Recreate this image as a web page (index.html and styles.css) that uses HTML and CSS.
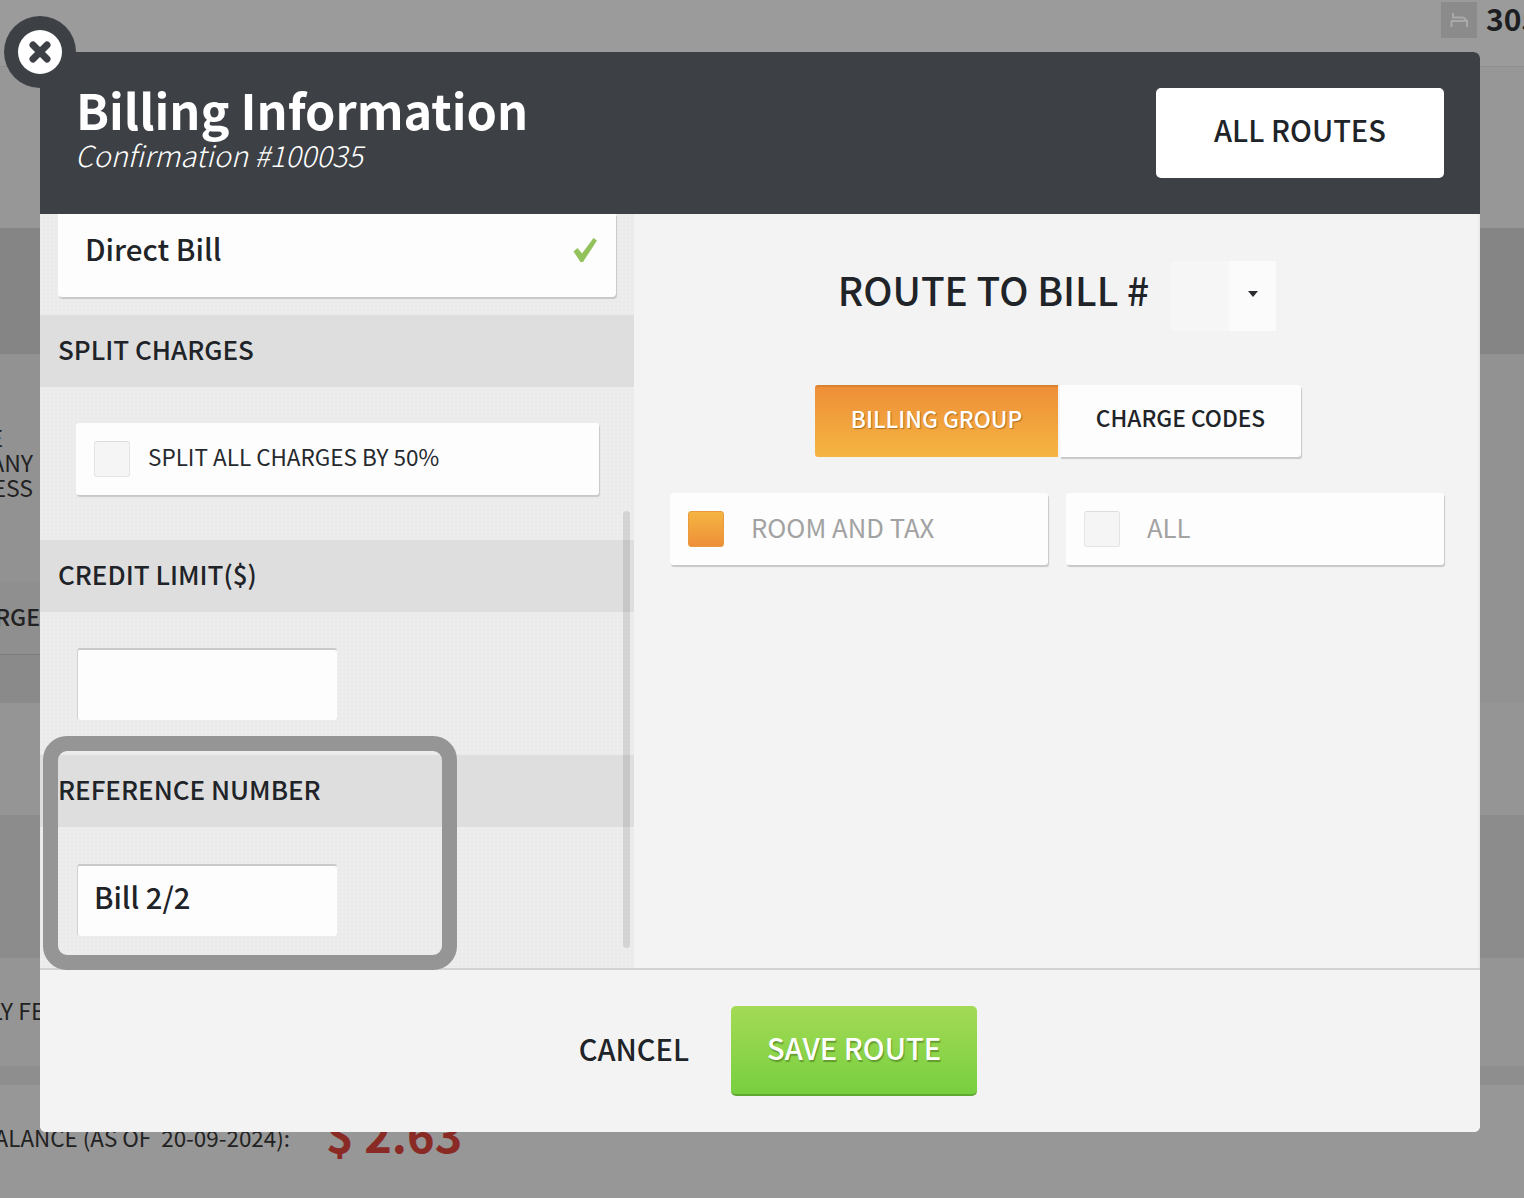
FILE: index.html
```html
<!DOCTYPE html>
<html lang="en">
<head>
<meta charset="utf-8">
<title>Billing Information</title>
<link rel="stylesheet" href="styles.css">
</head>
<body>
<main class="page">
  <div class="bg-top">
    <div class="room">
      <span class="room-icon">
        <svg width="18" height="14" viewBox="0 0 18 14" fill="none" stroke="#a9a9a9" stroke-width="2"><path d="M3 0v4.500h9c2.500 0 4 2 5 4.500M1 8h16v6M1.500 8v6"/></svg>
      </span>
      <span class="room-num">305</span>
    </div>
  </div>
  <div class="band band-a"></div>
  <div class="band band-b"></div>
  <div class="band band-c"><div class="clip-label"><span class="clip-first">NAME</span>COMPANY<br>ADDRESS</div></div>
  <div class="band band-d"><div class="cell-d"><div class="clip-label strong">CHARGE</div></div></div>
  <div class="band band-e"><div class="cell-e"></div></div>
  <div class="band band-f"></div>
  <div class="band band-g"></div>
  <div class="band band-h"><div class="clip-label wide-fee">DAILY FEE</div></div>
  <div class="band band-i"></div>
  <div class="band band-j">
    <div class="balance-label">BALANCE (AS OF&nbsp; 20-09-2024):</div>
    <div class="balance-value">$ 2.63</div>
  </div>
</main>

<section class="modal">
  <header class="modal-head">
    <div>
      <h1 class="title">Billing Information</h1>
      <p class="subtitle">Confirmation #100035</p>
    </div>
    <button class="btn-routes">ALL ROUTES</button>
  </header>

  <div class="modal-body">
    <div class="col-left">
      <div class="card-bill">
        <span>Direct Bill</span>
        <svg class="check" width="26" height="26" viewBox="0 0 26 26"><path d="M1.500 14.500l4-3.500 4.500 5.500L21.500 1l3.500 2.500L11 25h-2.500z" fill="#93c15c"/></svg>
      </div>
      <h2 class="band-title">SPLIT CHARGES</h2>
      <div class="block block-split">
        <label class="card-split"><span class="box"></span><span class="split-text">SPLIT ALL CHARGES BY 50%</span></label>
      </div>
      <h2 class="band-title">CREDIT LIMIT($)</h2>
      <div class="block block-credit"><input class="field" type="text" aria-label="Credit limit"></div>
      <h2 class="band-title">REFERENCE NUMBER</h2>
      <div class="block block-ref"><input class="field" type="text" value="Bill 2/2" aria-label="Reference number"></div>
      <div class="scrollbar"></div>
    </div>

    <div class="col-right">
      <div class="route-row">
        <span class="route-label">ROUTE TO BILL #</span>
        <div class="select"><span class="select-val"></span><span class="select-arrow"><i class="caret"></i></span></div>
      </div>
      <div class="tabs">
        <button class="tab tab-on">BILLING GROUP</button>
        <button class="tab tab-off">CHARGE CODES</button>
      </div>
      <div class="options">
        <div class="option"><span class="box box-on"></span><span class="option-text">ROOM AND TAX</span></div>
        <div class="option"><span class="box"></span><span class="option-text">ALL</span></div>
      </div>
    </div>
  </div>

  <footer class="modal-foot">
    <button class="btn-cancel">CANCEL</button>
    <button class="btn-save">SAVE ROUTE</button>
  </footer>

  <div class="highlight"></div>
  <button class="close" aria-label="Close">
    <span class="close-inner">
      <svg width="24" height="24" viewBox="0 0 24 24"><path d="M5 5L19 19M19 5L5 19" stroke="#3d4045" stroke-width="7" stroke-linecap="round" fill="none"/></svg>
    </span>
  </button>
</section>
</body>
</html>
```

FILE: styles.css
```css
* { box-sizing: border-box; }
html, body { margin: 0; padding: 0; height: 1198px; overflow: hidden; }
body {
  font-family: "Noto Sans CJK SC", "Noto Sans", sans-serif;
  color: #202327;
  background: #979797;
  position: relative;
}
button, input { font-family: inherit; }

/* page behind the dialog */
.page { display: flex; flex-direction: column; height: 1198px; overflow: hidden; }
.bg-top {
  height: 67px;
  background: #9b9b9b;
  border-bottom: 1px solid #8e8e8e;
  display: flex;
  justify-content: flex-end;
  padding-top: 2px;
}
.room { width: 83px; display: flex; align-items: flex-start; gap: 9px; overflow: hidden; }
.room-icon {
  flex: none; width: 36px; height: 36px; background: #8b8b8b;
  display: flex; align-items: center; justify-content: center;
}
.room-num { font-size: 30px; font-weight: 700; line-height: 32px; color: #1c1e21; }
.band { display: flex; align-items: center; flex: none; }
.band-a { height: 161px; background: #979797; }
.band-b { height: 126px; background: #858585; }
.band-c { height: 228px; background: #929292; align-items: flex-start; padding-top: 71px; }
.band-d { height: 73px; background: #929292; align-items: stretch; }
.band-e { height: 48px; background: #929292; align-items: stretch; }
.cell-d {
  width: 40px; flex: none; display: flex; align-items: center; padding-bottom: 4px;
  background: #8f8f8f; border-bottom: 1px solid #7c7c7c;
}
.cell-e { width: 40px; flex: none; background: #8a8a8a; }
.band-f { height: 112px; background: #959595; }
.band-g { height: 143px; background: #8c8c8c; }
.band-h { height: 108px; background: #959595; padding-bottom: 4px; }
.band-i { height: 19px; background: #8e8e8e; }
.band-j { height: 113px; background: #979797; padding-bottom: 10px; gap: 36px; justify-content: flex-start; }
.clip-label {
  width: 33px; flex: none; display: block; direction: rtl;
  font-size: 23px; line-height: 25px; white-space: nowrap; color: #222;
  text-align: right;
}
.clip-first { display: block; padding-right: 30px; }
.clip-label.strong { width: 40px; font-weight: 500; }
.clip-label.wide-fee { direction: ltr; text-align: left; width: 120px; margin-left: -46px; }
.balance-label { font-size: 22.400px; white-space: nowrap; width: 290px; flex: none; display: flex; justify-content: flex-end; color: #222; }
.balance-value { font-size: 46.800px; font-weight: 700; line-height: 1; color: #8a2a25; white-space: nowrap; margin-bottom: 6px; }

/* dialog */
.modal {
  position: absolute; left: 40px; top: 52px; width: 1440px; height: 1080px;
  display: flex; flex-direction: column;
  background-color: #f3f3f3;
  border-radius: 6px;
}
.modal-head {
  height: 162px; flex: none; background: #3d4045; border-radius: 6px 6px 0 0;
  display: flex; justify-content: space-between; align-items: flex-start;
  padding: 32px 36px 0;
}
.title { margin: 0; font-size: 48.600px; line-height: 50px; font-weight: 700; color: #fff; }
.subtitle { margin: 1px 0 0 -1px; font-size: 29px; line-height: 38px; font-style: italic; font-weight: 300; color: #fff; }
.btn-routes {
  width: 288px; height: 90px; margin-top: 4px; border: 0; border-radius: 5px; background: #fff;
  font-size: 29px; font-weight: 500; color: #202327; padding: 0 0 9px;
}
.modal-body { flex: 1; display: flex; min-height: 0; border-bottom: 2px solid #d2d2d2; }

.col-left {
  width: 594px; flex: none; position: relative; overflow: hidden;
  background-color: #ebebeb;
  background-image: radial-gradient(rgba(255,255,255,.14) 1px, transparent 1px);
  background-size: 4px 4px;
}
.card-bill {
  margin: 0 18px 18px; height: 83px; background: #fdfdfd; border-radius: 0 0 4px 4px;
  box-shadow: 1px 2px 1px #c8c8c8;
  display: flex; align-items: flex-start; justify-content: space-between;
  padding: 11px 18px 0 27px; font-size: 29.500px; font-weight: 500; line-height: 46px;
}
.check { margin-top: 12px; }
.band-title {
  margin: 0; height: 72px; background: #dedede; padding-left: 18px;
  font-size: 26px; line-height: 67px; font-weight: 500; color: #202327;
}
.block { padding: 36px 36px 0; }
.block-split { height: 153px; padding-right: 35px; }
.block-credit { height: 143px; }
.block-ref { height: 141px; padding-top: 37px; }
.card-split {
  height: 72px; display: flex; align-items: center; gap: 18px;
  background: #fdfdfd; border-radius: 3px; box-shadow: 1px 2px 1px #c8c8c8;
  padding: 0 18px; font-size: 22.500px; color: #26292d;
}
.split-text { margin-bottom: 6px; }
.box {
  width: 36px; height: 36px; flex: none; border-radius: 3px;
  background: #f5f5f5; border: 1px solid #e4e4e4; border-top-color: #dcdcdc;
}
.box-on {
  background: linear-gradient(#f5b542, #ee8f38); border: 1px solid #e89a3c;
}
.field {
  display: block; width: 260px; height: 72px; margin-left: 1px;
  background: #fdfdfd; border: 0; border-top: 2px solid #c9c9c9; border-left: 1px solid #d2d2d2;
  border-radius: 3px; outline: 0;
  padding: 0 16px 10px; font-size: 29.200px; font-weight: 500; color: #202327;
}
.scrollbar {
  position: absolute; left: 583px; top: 297px; width: 7px; height: 437px;
  border-radius: 4px; background: rgba(0,0,0,.1);
}

.col-right {
  flex: 1; display: flex; flex-direction: column; align-items: center; padding: 47px 36px 0;
  background-color: #f3f3f3;
  box-shadow: inset -2px 0 2px rgba(0,0,0,.04);
}
.route-row { display: flex; align-items: center; gap: 21px; height: 70px; }
.route-label { font-size: 38.800px; font-weight: 500; color: #202327; line-height: 62px; margin-bottom: 14px; }
.select { width: 106px; height: 70px; display: flex; }
.select-val { width: 59px; background: #f6f6f6; }
.select-arrow { flex: 1; background: #fbfbfb; display: flex; justify-content: center; align-items: center; }
.caret { width: 0; height: 0; border: 5px solid transparent; border-top: 6px solid #2a2c30; border-bottom: 0; margin-top: -4px; }
.tabs { display: flex; gap: 2px; margin-top: 54px; margin-left: 2px; }
.tab {
  height: 72px; border: 0; font-size: 22.700px; font-weight: 500; padding: 0 0 8px;
}
.tab-on {
  width: 243px; color: #fff; border-radius: 3px 0 0 3px;
  border-top: 2px solid #d9822f;
  background: linear-gradient(#ee8f38, #f5b542);
  text-shadow: 1px 1px 1px rgba(120,70,10,.55);
}
.tab-off {
  width: 241px; color: #202327; background: #fdfdfd; border-radius: 0 3px 3px 0;
  box-shadow: 1px 2px 1px #c8c8c8;
}
.options { display: flex; gap: 18px; margin-top: 36px; align-self: stretch; }
.option {
  flex: 1; height: 72px; display: flex; align-items: center; gap: 28px;
  background: #fdfdfd; border-radius: 3px; box-shadow: 1px 2px 1px #c8c8c8;
  padding: 0 18px; font-size: 25.700px; color: #a2a2a2;
}
.option-text { margin-bottom: 6px; margin-left: -1px; }

.modal-foot {
  flex: none; height: 162px; display: flex; align-items: center; justify-content: center; gap: 42px;
  padding: 0 0 0 36px; border-radius: 0 0 6px 6px; background: #f3f3f3;
}
.btn-cancel { border: 0; background: none; padding: 0 0 6px; font-size: 29px; font-weight: 500; color: #202327; }
.btn-save {
  width: 246px; height: 90px; border: 0; border-bottom: 2px solid #5fa931; border-radius: 5px;
  background: linear-gradient(#a4da55, #78cf3f);
  color: #fff; font-size: 29.100px; font-weight: 500; padding: 0 0 6px;
  text-shadow: 1px 2px 1px rgba(70,120,30,.6);
}

/* annotation frame and close badge sit over the dialog */
.highlight {
  position: absolute; left: 3px; top: 684px; width: 414px; height: 234px;
  border: 15px solid #959595; border-radius: 24px; pointer-events: none;
}
.close {
  position: absolute; left: -36px; top: -36px; width: 72px; height: 72px;
  border: 0; padding: 0; border-radius: 50%; background: #3d4045;
  display: flex; align-items: center; justify-content: center;
}
.close-inner {
  width: 44px; height: 44px; border-radius: 50%; background: #fff;
  display: flex; align-items: center; justify-content: center;
}
```
